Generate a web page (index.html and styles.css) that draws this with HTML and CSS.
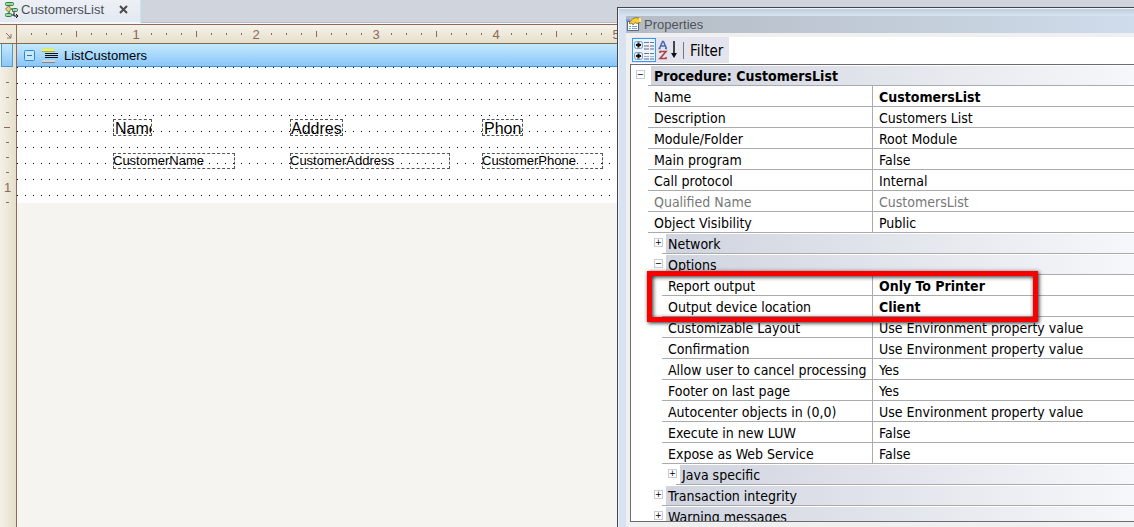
FILE: index.html
```
<!DOCTYPE html>
<html lang="en">
<head>
<meta charset="utf-8">
<title>CustomersList</title>
<link rel="stylesheet" href="styles.css">
</head>
<body>
<main class="editor">
  <div class="tabs" role="tablist">
    <div class="tab" role="tab" aria-selected="true">
      <svg class="tab-icon" width="15" height="17" viewBox="0 0 15 17" aria-hidden="true">
        <path d="M5 5v9h5M4 8h5v3" fill="none" stroke="#222"/>
        <rect x="1.500" y="1.500" width="8" height="3" rx="1" fill="#8fe09b" stroke="#3d7a48"/>
        <path d="M4.500 5l3 3-3 3-3-3z" fill="#f2d64b" stroke="#777"/>
        <rect x="8.500" y="7.500" width="5" height="3" rx="1" fill="#8fe09b" stroke="#3d7a48"/>
        <rect x="1.500" y="12.500" width="6" height="3" rx="1" fill="#8fe09b" stroke="#3d7a48"/>
        <path d="M10 11v4h4M12 13l2 2-2 2" fill="none" stroke="#111"/>
      </svg>
      <span class="tab-name">CustomersList</span>
      <button class="tab-close" aria-label="Close tab">
        <svg width="9" height="9" viewBox="0 0 9 9"><path d="M1 1l7 7M8 1L1 8" stroke="#4a4a4a" stroke-width="2"/></svg>
      </button>
    </div>
  </div>

  <div class="ruler-row">
    <div class="corner">
      <svg width="7" height="7" viewBox="0 0 7 7" aria-hidden="true"><path d="M1 1l5 5M6 2v4H2" fill="none" stroke="#8a7060"/></svg>
    </div>
    <div class="ruler-x">
      <svg class="ticks" width="100%" height="18" aria-hidden="true">
        <defs>
          <pattern id="tx" width="120" height="18" patternUnits="userSpaceOnUse">
            <path d="M14 8h1v2h-1zM29 8h1v2h-1zM44 8h1v2h-1zM59 6h1v6h-1zM74 8h1v2h-1zM89 8h1v2h-1zM104 8h1v2h-1z" fill="#8a6a58"/>
          </pattern>
        </defs>
        <rect width="100%" height="18" fill="url(#tx)"/>
      </svg>
      <div class="numbers-x"><span>1</span><span>2</span><span>3</span><span>4</span><span>5</span></div>
    </div>
  </div>

  <div class="workspace">
    <div class="ruler-y">
      <div class="band-marker"></div>
      <div class="scale-y">
        <svg class="ticks" width="16" height="136" viewBox="0 0 16 136" aria-hidden="true">
          <path d="M6 15h3v1H6zM6 30h3v1H6zM6 45h3v1H6zM4 60h6v1H4zM6 75h3v1H6zM6 90h3v1H6zM6 105h3v1H6zM6 135h3v1H6z" fill="#8a6a58"/>
        </svg>
        <span class="number-y">1</span>
      </div>
    </div>
    <section class="report">
      <header class="band">
        <button class="band-toggle" aria-label="Collapse ListCustomers">
          <svg width="11" height="11" viewBox="0 0 11 11"><rect x="0.500" y="0.500" width="10" height="10" rx="1" fill="#c5e8fb" stroke="#3a87c6"/><path d="M3 5h5v1H3z" fill="#2875b8"/></svg>
        </button>
        <svg class="band-icon" width="16" height="15" viewBox="0 0 16 15" aria-hidden="true">
          <path d="M1 1h11v2H0V2z" fill="#ffff00"/><path d="M0 3h13v1H0z" fill="#a0a0a0"/>
          <path d="M3 5h13v1H3zM3 7h13v1H3zM3 9h13v1H3z" fill="#111"/>
          <path d="M1 12h12v2H0v-1z" fill="#d8d4d4"/><path d="M0 14h13v1H0z" fill="#808488"/>
        </svg>
        <span>ListCustomers</span>
      </header>
      <div class="canvas">
        <svg class="dots" width="100%" height="136" aria-hidden="true">
          <defs><pattern id="dot" width="8" height="16" patternUnits="userSpaceOnUse"><rect width="1" height="1" fill="#000"/></pattern></defs>
          <rect width="100%" height="136" fill="url(#dot)"/>
        </svg>
        <div class="label name">Name</div>
        <div class="label address">Address</div>
        <div class="label phone">Phone</div>
        <div class="field name">CustomerName</div>
        <div class="field address">CustomerAddress</div>
        <div class="field phone">CustomerPhone</div>
      </div>
    </section>
  </div>
</main>

<aside class="window">
  <h1 class="title">
    <svg width="16" height="15" viewBox="0 0 16 15" aria-hidden="true">
      <path d="M0 2h4v3H0z" fill="#7c9ee8"/>
      <path d="M1.500 4.500h11v9h-11z" fill="#f5faff" stroke="#566b80"/>
      <path d="M3 9h2v1H3zM6 9h5v1H6zM3 11h2v1H3zM6 11h5v1H6z" fill="#7fa0c4"/>
      <path d="M3 6l4-4.500 3-1 4 1v4l-3 1-2-1-2 2.500-1-2-2 1z" fill="#f3cf3d" stroke="#8d6b12" stroke-width=".8"/>
      <path d="M13 1h2v4h-2z" fill="#ffe978"/>
    </svg>
    <span>Properties</span>
  </h1>
  <div class="pane">
    <div class="toolbar-row">
      <div class="toolbar" role="toolbar">
        <button class="tool pressed" aria-label="Categorized">
          <svg width="22" height="22" viewBox="0 0 22 22">
            <g fill="#dfeaf4" stroke="#7d9cba"><rect x="1.500" y="2.500" width="8" height="7" rx="2"/><rect x="1.500" y="13.500" width="8" height="7" rx="2"/></g>
            <path d="M3 5h5v2H3zM4.500 3.500h2v5h-2zM3 16h5v2H3zM4.500 14.500h2v5h-2z" fill="#111"/>
            <path d="M11 3h5v1h-5zM17 3h4v1h-4z" fill="#70798a"/>
            <path d="M11 6h5v2h-5zM17 6h4v2h-4zM11 9h5v2h-5zM17 9h4v2h-4zM11 17h5v1h-5zM17 17h4v1h-4zM11 19h5v2h-5zM17 19h4v2h-4z" fill="#a5aec0"/>
            <path d="M11 14h5v1h-5zM17 14h4v1h-4z" fill="#70798a"/>
          </svg>
        </button>
        <button class="tool" aria-label="Sort alphabetically">
          <svg width="20" height="20" viewBox="0 0 20 20" fill="none">
            <path d="M1.500 8.500l3-7h1l3 7M3 6h4M.5 8.500h2M7 8.500h2" stroke="#4a68b0" stroke-width="1.500"/>
            <path d="M2 13v-1.500h6L2 18.500h6V17" stroke="#a94448" stroke-width="1.600"/>
            <path d="M16 1v15" stroke="#111" stroke-width="1.500"/><path d="M13 13h6l-3 5z" fill="#111"/>
          </svg>
        </button>
        <span class="separator"></span>
        <button class="filter">Filter</button>
      </div>
    </div>
    <div class="grid">
      <table>
        <colgroup><col class="gutter"><col class="indent"><col class="indent"><col class="names"><col></colgroup>
        <tbody>
          <tr class="group top"><td><button class="toggle" aria-label="Collapse Procedure">−</button></td><th colspan="4"><div>Procedure: CustomersList</div></th></tr>
          <tr><td></td><th colspan="3">Name</th><td class="value changed">CustomersList</td></tr>
          <tr><td></td><th colspan="3">Description</th><td class="value">Customers List</td></tr>
          <tr><td></td><th colspan="3">Module/Folder</th><td class="value">Root Module</td></tr>
          <tr><td></td><th colspan="3">Main program</th><td class="value">False</td></tr>
          <tr><td></td><th colspan="3">Call protocol</th><td class="value">Internal</td></tr>
          <tr class="readonly"><td></td><th colspan="3">Qualified Name</th><td class="value">CustomersList</td></tr>
          <tr><td></td><th colspan="3">Object Visibility</th><td class="value">Public</td></tr>
          <tr class="group"><td colspan="2"><button class="toggle" aria-label="Expand Network">+</button></td><th colspan="3"><div>Network</div></th></tr>
          <tr class="group"><td colspan="2"><button class="toggle" aria-label="Collapse Options">−</button></td><th colspan="3"><div>Options</div></th></tr>
        </tbody>
        <tbody class="options">
          <tr><td colspan="2"></td><th colspan="2" class="marked">Report output<span class="highlight"></span></th><td class="value changed">Only To Printer</td></tr>
          <tr><td colspan="2"></td><th colspan="2">Output device location</th><td class="value changed">Client</td></tr>
          <tr><td colspan="2"></td><th colspan="2">Customizable Layout</th><td class="value">Use Environment property value</td></tr>
          <tr><td colspan="2"></td><th colspan="2">Confirmation</th><td class="value">Use Environment property value</td></tr>
          <tr><td colspan="2"></td><th colspan="2">Allow user to cancel processing</th><td class="value">Yes</td></tr>
          <tr><td colspan="2"></td><th colspan="2">Footer on last page</th><td class="value">Yes</td></tr>
          <tr><td colspan="2"></td><th colspan="2">Autocenter objects in (0,0)</th><td class="value">Use Environment property value</td></tr>
          <tr><td colspan="2"></td><th colspan="2">Execute in new LUW</th><td class="value">False</td></tr>
          <tr><td colspan="2"></td><th colspan="2">Expose as Web Service</th><td class="value">False</td></tr>
          <tr class="group"><td colspan="3"><button class="toggle" aria-label="Expand Java specific">+</button></td><th colspan="2"><div>Java specific</div></th></tr>
          <tr class="group"><td colspan="2"><button class="toggle" aria-label="Expand Transaction integrity">+</button></td><th colspan="3"><div>Transaction integrity</div></th></tr>
          <tr class="group"><td colspan="2"><button class="toggle" aria-label="Expand Warning messages">+</button></td><th colspan="3"><div>Warning messages</div></th></tr>
        </tbody>
      </table>
    </div>
  </div>
</aside>
</body>
</html>
```
FILE: styles.css
```
* { box-sizing: border-box; }
body {
  margin: 0;
  height: 100vh;
  overflow: hidden;
  position: relative;
  background: #f5f4f0;
  color: #000;
  font: 13px "Liberation Sans", Arial, sans-serif;
}
button { margin: 0; padding: 0; border: 0; background: none; font: inherit; color: inherit; }
svg { display: block; flex: none; }

/* Report editor */
.editor { height: 100%; display: flex; flex-direction: column; }
.tabs { display: flex; height: 24px; background: #d0d4dd; border-bottom: 1px solid #f7f7f7; box-shadow: inset 0 -1px #b9bcc2; }
.tab {
  display: flex;
  align-items: center;
  width: 141px;
  padding: 0 12px 3px 4px;
  background: linear-gradient(#edf0f5, #e3e9f2);
  border-right: 1px solid #bfe9ef;
  border-bottom: 1px solid #f7f7f7;
}
.tab-name { margin-left: 2px; color: #4c5058; }
.tab-close { margin-left: auto; }

.ruler-row { display: flex; height: 20px; flex: none; border-top: 1px solid #8a6a58; border-bottom: 1px solid #7c6c5c; }
.corner { display: flex; align-items: center; justify-content: center; width: 17px; padding-top: 2px; background: #efe9da; border-right: 1px solid #8a6a58; }
.ruler-x { position: relative; flex: 1; background: linear-gradient(#f5f2ea, #e6dfcb); overflow: hidden; }
.ticks { position: absolute; inset: 0; }
.numbers-x { display: flex; padding-left: 59px; color: #8a6a58; line-height: 19px; }
.numbers-x span { flex: none; width: 120px; text-align: center; }

.workspace { display: flex; flex: 1; }
.ruler-y { width: 17px; padding-right: 1px; background: linear-gradient(90deg, #f3f0e6, #e6dfcb); border-right: 1px solid #8a6a58; }
.band-marker { height: 23px; margin: 0 2px 0 1px; background: linear-gradient(#c5e8fb, #8cc8f8); border: 1px solid #4a9ad6; border-top: 0; }
.scale-y { position: relative; height: 136px; padding-top: 113px; text-align: center; color: #8a6a58; }
.number-y { display: block; line-height: 16px; }

.report { flex: 1; }
.band {
  display: flex;
  align-items: center;
  height: 23px;
  padding-left: 7px;
  background: linear-gradient(#c5e9fb, #88c6fb);
  border-bottom: 1px solid #4a90cc;
}
.band-icon { margin: 0 6px 0 7px; }
.canvas { position: relative; height: 136px; background: #fff; }
.dots { position: absolute; inset: 0; }

/* Controls placed freely on the report canvas */
.label, .field { position: absolute; border: 1px dashed #555; overflow: hidden; white-space: nowrap; }
.label { top: 52px; height: 17px; padding-left: 1px; font-size: 16px; line-height: 17px; }
.field { top: 86px; height: 16px; line-height: 13px; text-indent: -1px; }
.name { left: 96px; }
.address { left: 273px; }
.phone { left: 465px; }
.label.name { width: 39px; }
.label.address { width: 53px; padding-left: 0; }
.label.phone { width: 41px; }
.field.name { width: 122px; }
.field.address { width: 160px; }
.field.phone { width: 121px; }

/* Floating properties window */
.window {
  position: absolute;
  inset: 7px 0 0 617px;
  display: flex;
  flex-direction: column;
  padding: 8px 0 0 8px;
  background: linear-gradient(#bccbd9, #d7e3f0 8px);
  border: solid #42464c;
  border-width: 1px 0 0 1px;
  box-shadow: inset 1px 1px #eef4fa;
  font: 14px "DejaVu Sans Condensed", Tahoma, sans-serif;
}
.title {
  display: flex;
  align-items: center;
  gap: 2px;
  margin: 0;
  height: 17px;
  background: linear-gradient(90deg, #b4bbc4, #cfdceb);
  color: #505458;
  font: 13px "Liberation Sans", Arial, sans-serif;
}
.pane { display: flex; flex-direction: column; flex: 1; min-height: 0; padding: 4px 0 5px 4px; background: #f0f0f0; }
.toolbar-row { display: flex; height: 27px; padding-left: 2px; background: #fff; box-shadow: inset 2px 0 #f0f0f0; }
.toolbar { display: flex; align-items: center; height: 26px; padding-right: 6px; background: #e4e4ef; }
.tool.pressed { border: 1px solid #3399ff; background: #eef3fb; }
.tool + .tool { margin-left: 2px; }
.separator { width: 1px; height: 17px; margin: 0 6px 0 5px; background: #777; }
.filter { font-size: 15px; padding-top: 2px; }

/* Property grid */
.grid { flex: 1; min-height: 0; overflow: hidden; background: #fff; border: solid #6a6c70; border-width: 1px 0 1px 1px; }
table { width: 100%; table-layout: fixed; border-collapse: separate; border-spacing: 0; }
.gutter { width: 17px; }
.indent { width: 14px; }
.names { width: 196px; }
tr { height: 21px; }
td, th { padding: 0; line-height: 18px; font-weight: normal; text-align: left; white-space: nowrap; vertical-align: top; }
th, .value { padding: 2px 0 0 6px; border-bottom: 1px solid #ababab; }
.value { border-left: 1px solid #ababab; }
.changed { font-weight: bold; }
.readonly { color: #777; }
.group th { padding: 1px 0 0 4px; }
.group div { height: 19px; padding-left: 2px; line-height: 20px; overflow: hidden; background: linear-gradient(90deg, #d0d4df, #f6f7fa); }
.group.top th { padding-left: 3px; }
.group.top div { padding-left: 3px; font-weight: bold; }
.toggle {
  display: block;
  width: 9px;
  height: 9px;
  margin: 5px -1px 0 auto;
  border: 1px solid #c8ccd6;
  font-size: 9px;
  line-height: 7px;
  text-align: center;
}
.top .toggle { margin-right: 3px; }
.marked { position: relative; }
.highlight {
  position: absolute;
  z-index: 1;
  left: -15px;
  top: -4px;
  width: 391px;
  height: 51px;
  border: 5px solid #f60000;
  box-shadow: 1px 1px 4px #222, inset 1px 1px 4px #222;
}
```
